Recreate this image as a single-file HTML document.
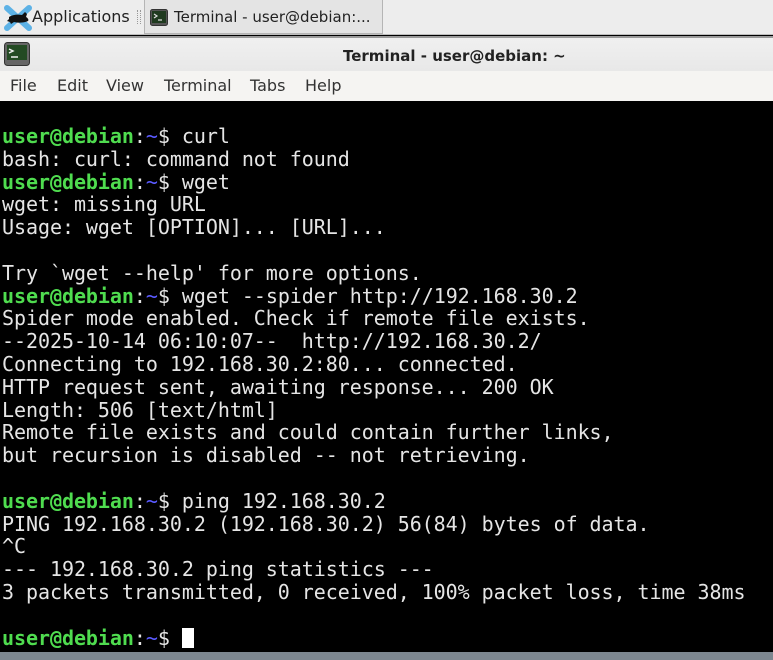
<!DOCTYPE html>
<html><head><meta charset="utf-8"><style>
*{margin:0;padding:0;box-sizing:border-box}
body{width:773px;height:660px;overflow:hidden;background:#000;font-family:"DejaVu Sans","Liberation Sans",sans-serif;position:relative}
#panel{position:absolute;left:0;top:0;width:773px;height:35px;background:#ededed;border-bottom:1px solid #bdbdbd}
#apps{position:absolute;left:32px;top:7px;font-size:16px;color:#222;white-space:nowrap}
#grip{position:absolute;left:137px;top:10px;width:4px;height:14px;border-left:1px dotted #999;border-right:1px dotted #999}
#task{position:absolute;left:144px;top:0px;width:239px;height:34px;background:#e4e4e4;border:1px solid #b5b5b5;border-top:none}
#task span{position:absolute;left:29px;top:8px;font-size:15px;color:#222;white-space:nowrap}
#title{position:absolute;left:0;top:36px;width:773px;height:35px;background:linear-gradient(#f0f0f0,#e8e8e8);border-top:2px solid #9a9a9a}
#title b{position:absolute;left:343px;top:9px;font-size:15px;color:#222}
#menu{position:absolute;left:0;top:71px;width:773px;height:30px;background:#f5f4f2;font-size:16px;color:#333}
#menu span{position:absolute;top:5px}
#term{position:absolute;left:0;top:101px;width:773px;height:551px;background:#000}
pre{position:absolute;left:2px;top:24px;font-family:"DejaVu Sans Mono","Liberation Mono",monospace;font-size:20px;line-height:22.8px;color:#e5e5e5;letter-spacing:-0.05px}
.g{color:#4fdc4f;font-weight:bold}.b{color:#5a5aff}
.cur{display:inline-block;width:12px;height:20px;background:#fff;vertical-align:-3px}
#bot{position:absolute;left:0;top:652px;width:773px;height:8px;background:#7d8790}
</style></head><body>
<div id="panel">
<svg style="position:absolute;left:4px;top:5px" width="28" height="26" viewBox="0 0 28 26"><path d="M3 3L25 23M25 3L3 23" stroke="#5db2e6" stroke-width="6" stroke-linecap="round"/><path d="M5 12c3-2 8-3 13-2l3-3 2 2-1 3c2 1 3 3 2 4-4 2-10 2-14 1l-3 2-1-2-3-1 2-2z" fill="#111"/></svg>
<div id="apps">Applications</div>
<div id="grip"></div>
<div id="task"><svg style="position:absolute;left:5px;top:9px" width="18" height="17"><rect x="0.5" y="0.5" width="17" height="16" rx="2" fill="#555" stroke="#333"/><rect x="2" y="2" width="14" height="12" fill="#1f3a1f"/><path d="M4 5l3 2-3 2M8 11h4" stroke="#ddd" stroke-width="1.2" fill="none"/></svg><span>Terminal - user@debian:...</span></div>
</div>
<div id="title"><svg style="position:absolute;left:4px;top:4px" width="26" height="24"><rect x="0.5" y="0.5" width="25" height="23" rx="3" fill="#666" stroke="#333"/><rect x="3" y="3" width="20" height="15" fill="#234a23"/><path d="M5 7l4 2-4 2M7 15h7" stroke="#eee" stroke-width="1.5" fill="none"/></svg><b>Terminal - user@debian: ~</b></div>
<div id="menu"><span style="left:10px">File</span><span style="left:57px">Edit</span><span style="left:106px">View</span><span style="left:164px">Terminal</span><span style="left:250px">Tabs</span><span style="left:305px">Help</span></div>
<div id="term"><pre><span class="g">user@debian</span>:<span class="b">~</span>$ curl
bash: curl: command not found
<span class="g">user@debian</span>:<span class="b">~</span>$ wget
wget: missing URL
Usage: wget [OPTION]... [URL]...

Try `wget --help' for more options.
<span class="g">user@debian</span>:<span class="b">~</span>$ wget --spider http://192.168.30.2
Spider mode enabled. Check if remote file exists.
--2025-10-14 06:10:07--  http://192.168.30.2/
Connecting to 192.168.30.2:80... connected.
HTTP request sent, awaiting response... 200 OK
Length: 506 [text/html]
Remote file exists and could contain further links,
but recursion is disabled -- not retrieving.

<span class="g">user@debian</span>:<span class="b">~</span>$ ping 192.168.30.2
PING 192.168.30.2 (192.168.30.2) 56(84) bytes of data.
^C
--- 192.168.30.2 ping statistics ---
3 packets transmitted, 0 received, 100% packet loss, time 38ms

<span class="g">user@debian</span>:<span class="b">~</span>$ <span class="cur"></span></pre></div>
<div id="bot"></div>
</body></html>
